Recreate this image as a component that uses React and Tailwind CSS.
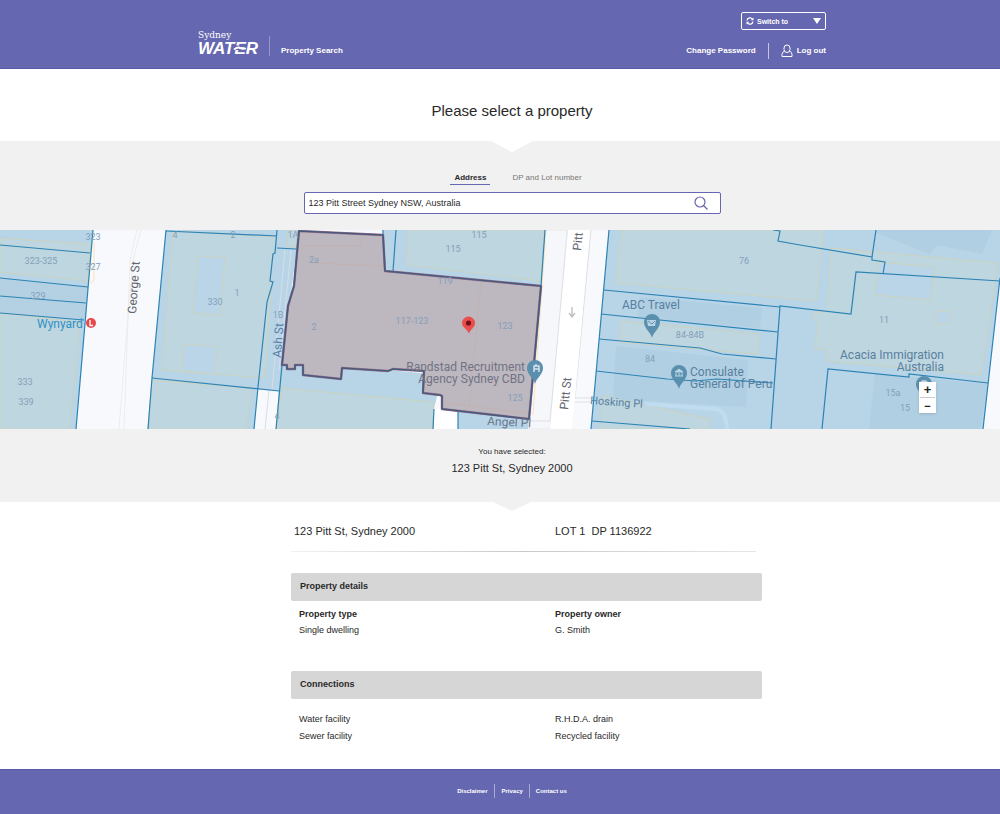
const BOUNDARIES = [
  "M0 15L90 23", "M0 48L88 57", "M0 66L86 73", "M0 83L84 90", "M93 0L76 199",
  "M166 0L152 148L148 199", "M166 1L277 6", "M152 148L279 161",
  "M277 0L275 23L273 24L270 51L273 52L267 72L258 157L254 199", "M277 18L296 19", "M282 135L276 199",
  "M396 0L393 41", "M383 0V5", "M545 0L541 56", "M458 182V199", "M434 179L433 199",
  "M609 0L591 199", "M604 60L780 77", "M601 84L778 102", "M599 109L700 118L722 124L776 129",
  "M596 141L667 149L695 151L717 149L773 153", "M592 191L690 199",
  "M773 0L780 1L778 11L800 15L872 27L872 30L885 32L883 44", "M876 0L872 27",
  "M771 199L780 76L851 84L856 42L1000 51", "M1000 48L983 199",
  "M822 199L828 139L909 147V144L988 153",
];

const BUILDINGS = [
  "M0 8L90 14L88 51L0 42Z", "M0 83L80 92L69 199H0Z",
  "M173 1L277 7L269 50L272 53L265 148L162 140Z", "M152 150L251 158L246 199H148Z",
  "M408 0L406 35L541 51L545 0Z", "M281 158L433 172V199H277Z",
  "M288 1L298 2L296 18L287 16Z",
  "M621 0L616 53L816 71L824 0Z", "M831 18L998 33L981 145L827 131L826 120L815 119L818 93L812 88L814 82L827 82Z",
  "M621 91L759 104L757 124L619 112Z", "M603 166L710 189L708 199H600Z",
];

const COURTS = [
  "M198 26L225 28L220 85L193 83Z", "M184 114L217 117L215 144L182 141Z",
  "M878 32L934 37L931 70L875 65Z", "M936 82L948 81L951 86L948 94H935Z",
];

const SELECTED =
  "M299 1L383 5L385 41L541 56L529 189L442 179L442 166L440 165L423 163L424 141L393 139L388 141L342 138L341 149L303 145V135H295V139H287V135H282L288 76L294 56Z";

const NUMBERS = [
  [93, 10, "323"], [41, 34, "323-325"], [93, 40, "327"], [38, 69, "329"], [25, 155, "333"], [26, 175, "339"],
  [175, 8, "4"], [233, 8, "2"], [215, 75, "330"], [237, 66, "1"], [293, 8, "1A"], [278, 88, "1B"], [277, 189, "4"],
  [314, 33, "2a"], [314, 100, "2"], [412, 94, "117-123"], [479, 8, "115"], [453, 22, "115"], [445, 54, "119"],
  [505, 99, "123"], [515, 171, "125"], [744, 34, "76"], [690, 108, "84-84B"], [650, 132, "84"],
  [884, 93, "11"], [893, 166, "15a"], [905, 181, "15"],
];

function PlacePin({ x, y, children }) {
  return (
    <g transform={`translate(${x} ${y})`}>
      <path d="M0 15C-1 9 -8 6 -8 -1A8 8 0 1 1 8 -1C8 6 1 9 0 15Z" fill="#5a90ae" />
      {children}
    </g>
  );
}

function PropertyMap() {
  return (
    <svg viewBox="0 0 1000 199" preserveAspectRatio="xMidYMid slice" className="block h-[199px] w-full" role="img" aria-label="Map of 123 Pitt Street and its neighbours">
      <rect width="1000" height="199" fill="#f8f9fc" />
      <g fill="none" stroke="#e5e7ec">
        <path d="M141 0L133 30L126 110L119 199M137 0L130 30L124 199" stroke="#ececef" />
        <path d="M567 0L550 199H529L541 57L545 0Z" fill="#f6f7fb" />
        <path d="M568 0L550 191H530M591 0L575 168H594M574 172H592" fill="none" stroke="#dcdfe5" />
        <path d="M568 0H590L575 168L572 199H550Z" fill="#fff" stroke="none" />
        <path d="M546 0L533 185M94 12L94 50L90 54" stroke="#fae3bd" />
      </g>
      <g fill="#b8d4e7">
        <path d="M0 0H93L76 199H0Z" />
        <path d="M166 0H299L282 135L279 161L152 148Z" />
        <path d="M152 148L258 159L254 199H148Z" />
        <path d="M281 130L442 145L434 179L433 199H276Z" />
        <path d="M383 0H545L541 57L385 42Z" />
        <path d="M458 180L529 189L528 199H458Z" />
        <path d="M609 0H1000V48L983 199H591Z" />
      </g>
      <path d="M434 179H458V199H433Z" fill="#fff" />
      <path d="M269 160L265 199M285 20L272 160M291 20L279 140" stroke="#d7dde8" fill="none" />
      <g fill="#bed6df" stroke="#cbd3c0" strokeWidth="1">
        {BUILDINGS.map((d) => <path key={d} d={d} />)}
      </g>
      <g fill="#b9d5e7" stroke="#cbd3c0">
        {COURTS.map((d) => <path key={d} d={d} />)}
      </g>
      <g fill="#b1cfe2">
        <path d="M876 3L930 24L937 15L982 24L992 0H877Z" />
        <path d="M875 144L988 154L980 199H869Z" />
        <path d="M640 67L762 78L760 98L637 87Z" />
        <path d="M616 116L748 130L746 177L613 169Z" />
        <path d="M0 48L88 57L84 90L0 83Z" opacity=".6" />
      </g>
      <path d="M645 174L716 179Q726 180 727 199" stroke="#bfdcf0" strokeWidth="4" fill="none" />
      <g fill="none" stroke="#2c83b4" strokeWidth="1.2">
        {BOUNDARIES.map((d) => <path key={d} d={d} />)}
      </g>
      <path d={SELECTED} fill="#bdb7bf" stroke="#a07488" strokeWidth="2.4" strokeLinejoin="round" />
      <path d={SELECTED} fill="none" stroke="#475b80" strokeWidth="1.7" strokeLinejoin="round" />
      <path d="M481 52L469 177M301 16H361V7M312 33L383 36M444 173L528 183" stroke="#c3b3ad" strokeWidth="1" fill="none" />

      <g fontFamily="Roboto, sans-serif" fontSize="9" fill="#849fbb" textAnchor="middle">
        {NUMBERS.map(([x, y, label]) => <text key={`${label}-${x}`} x={x} y={y}>{label}</text>)}
      </g>

      <g fontFamily="Roboto, sans-serif" fontSize="12" fill="#61656d">
        <text transform="translate(136 84) rotate(-86)">George St</text>
        <text transform="translate(281 128) rotate(-86)" fill="#5781a6">Ash St</text>
        <text transform="translate(568 180) rotate(-84)">Pitt St</text>
        <text transform="translate(581 21) rotate(-84)">Pitt</text>
      </g>
      <g fill="#58809f" fontFamily="Roboto, sans-serif" fontSize="12">
        <text x="37" y="98" fill="#2e91c5">Wynyard</text>
        <text x="622" y="79">ABC Travel</text>
        <text x="690" y="146">Consulate</text>
        <text x="690" y="158">General of Peru</text>
        <text x="944" y="129" textAnchor="end">Acacia Immigration</text>
        <text x="944" y="141" textAnchor="end">Australia</text>
        <text fontSize="11" transform="translate(590 174) rotate(4)">Hosking Pl</text>
        <text fill="#687689" transform="translate(487 195) rotate(3)">Angel Pl</text>
        <g fill="#707384">
          <text x="525" y="141" textAnchor="end">Randstad Recruitment</text>
          <text x="525" y="153" textAnchor="end">Agency Sydney CBD</text>
        </g>
      </g>

      <circle cx="91" cy="93" r="5" fill="#e9484c" />
      <path d="M90 90V95.500H93" stroke="#fff" strokeWidth="1.300" fill="none" />
      <PlacePin x={652} y={93}>
        <path d="M-5 -3H4L3 3H-4Z" fill="#b8d4e7" />
        <path d="M-4 -2L0 1L3 -2" stroke="#5a90ae" fill="none" />
      </PlacePin>
      <PlacePin x={679} y={144}>
        <path d="M-4 -2L0 -5L4 -2ZM-4 2H4M-3 -1V2M0 -1V2M3 -1V2" fill="#b8d4e7" stroke="#b8d4e7" />
      </PlacePin>
      <PlacePin x={535} y={139}>
        <path d="M-1 3V-3H4V3M-1 0H4M1 -5V-3" stroke="#d7e1ea" strokeWidth="1.500" fill="none" />
      </PlacePin>
      <PlacePin x={924} y={155}>
        <circle cy="-1" r="4" fill="#b8d4e7" />
      </PlacePin>
      <path d="M572 77V87M569 83L572 87L575 83" stroke="#b9bcc1" strokeWidth="1.300" fill="none" />
      <path d="M469 104C468 99 462 98 462 93A6.500 6.500 0 0 1 475 93C475 98 470 99 469 104Z" fill="#e94f4c" />
      <circle cx="468.500" cy="93" r="2.600" fill="#711015" />
    </svg>
  );
}

function Notch({ className }) {
  return (
    <svg viewBox="0 0 42 11" preserveAspectRatio="none" className={className} aria-hidden="true">
      <path d="M0 0H42L21 11Z" fill="currentColor" />
    </svg>
  );
}

function SectionTitle({ children }) {
  return <h2 className="flex h-7 items-center rounded-xs bg-[#d6d6d6] px-[9px] text-[9px] font-bold">{children}</h2>;
}

export default function App() {
  return (
    <div className="min-h-screen bg-white font-['Liberation_Sans',Arial,sans-serif] text-[#292929]">
      <header className="h-[69px] border-b border-[#5a5aa6] bg-[#6667b1] pl-6 text-white">
        <div className="mx-auto flex max-w-[628px] justify-between pt-3">
          <div className="flex items-end pb-[3px]">
            <a href="#home" className="flex flex-col">
              <span className="font-['DejaVu_Serif',serif] text-[9px] leading-[10px]">Sydney</span>
              <svg viewBox="0 0 62 16" className="h-4 w-[62px]" aria-label="Water">
                <text x="0" y="14" fontFamily="Liberation Sans, Arial, sans-serif" fontSize="17" fontWeight="700" fontStyle="italic" fill="#fff">WATER</text>
                <path d="M36 5.500H41V10H36Z" fill="#6667b1" />
                <path d="M36 9.500Q40 6.500 42 8T48 8.500" stroke="#fff" strokeWidth="1.800" fill="none" />
              </svg>
            </a>
            <div className="ml-[9px] h-5 border-l border-[#9596cc]" />
            <span className="ml-[11px] text-[8px] leading-[11px] font-bold">Property Search</span>
          </div>
          <div className="flex flex-col items-end gap-[13px]">
            <div className="relative">
              <select aria-label="Switch to" defaultValue="Switch to" className="block h-[18px] w-[85px] appearance-none rounded-xs border border-white bg-[#6667b1] pl-[15px] text-[7px] leading-[9px] font-bold text-white">
                <option>Switch to</option>
              </select>
              <svg viewBox="0 0 8 8" className="pointer-events-none absolute top-[5px] left-[5px] size-2" fill="none" stroke="#fff" strokeWidth="1.200" aria-hidden="true">
                <path d="M1 3.500A3 3 0 0 1 6.500 2.200M7 4.500A3 3 0 0 1 1.500 5.800" />
                <path d="M7.500 .5V3.200H4.800ZM.5 7.500V4.800H3.200Z" fill="#fff" stroke="none" />
              </svg>
              <svg viewBox="0 0 8 6" className="pointer-events-none absolute top-[6px] right-[5px] h-[6px] w-2" aria-hidden="true">
                <path d="M0 0H8L4 6Z" fill="#fff" />
              </svg>
            </div>
            <nav className="flex items-center text-[8px] leading-4 font-bold">
              <a href="#password">Change Password</a>
              <div className="ml-3 h-4 border-l border-[#c5c5e4]" />
              <a href="#logout" className="ml-3 flex items-center gap-1">
                <svg viewBox="0 0 12 14" className="h-[14px] w-3" fill="none" stroke="#fff" aria-hidden="true">
                  <rect x="3" y="1" width="6" height="7.500" rx="3" />
                  <path d="M3.500 7Q1 8 1 10.500V12.500H11V10.500Q11 8 8.500 7" strokeLinejoin="round" />
                </svg>
                Log out
              </a>
            </nav>
          </div>
        </div>
      </header>

      <main>
        <h1 className="flex h-[72px] items-center justify-center pt-3 pl-6 text-[15px] leading-5">Please select a property</h1>

        <section className="flex h-[89px] flex-col items-center bg-[#f1f1f1] pl-6">
          <Notch className="h-[11px] w-[42px] text-white" />
          <div className="mt-[19px] flex w-full max-w-[417px] items-start justify-center gap-[22px] pl-2 text-[8px] leading-[10px]">
            <button type="button" className="h-[14px] border-b border-[#6667b1] px-1 text-[8px] font-bold">Address</button>
            <button type="button" className="h-[14px] text-[#777]">DP and Lot number</button>
          </div>
          <form className="mt-[7px] flex h-[22px] w-full max-w-[417px] items-center rounded-xs border border-[#6667b1] bg-white">
            <input aria-label="Address" defaultValue="123 Pitt Street Sydney NSW, Australia" className="min-w-0 flex-1 px-1 text-[9px] leading-3 outline-none" />
            <button type="button" aria-label="Search" className="mr-3">
              <svg viewBox="0 0 14 14" className="size-[14px]" fill="none" stroke="#6667b1" strokeWidth="1.200" aria-hidden="true">
                <circle cx="6" cy="6" r="5" />
                <path d="M9.500 9.500L13.500 13.500" />
              </svg>
            </button>
          </form>
        </section>

        <div className="relative">
          <PropertyMap />
          <div className="absolute top-[152px] right-16 flex w-[17px] flex-col bg-white text-[#222] shadow-sm">
            <button type="button" aria-label="Zoom in" className="mx-px h-4 border-b border-[#ccc] text-[13px] leading-[14px] font-bold">+</button>
            <button type="button" aria-label="Zoom out" className="h-[15px] text-[11px] leading-[14px] font-bold">−</button>
          </div>
        </div>

        <section className="flex h-[73px] flex-col items-center bg-[#f1f1f1] pt-[18px] pl-6">
          <p className="text-[8px] leading-[10px]">You have selected:</p>
          <p className="mt-1 text-[11px] leading-[14px]">123 Pitt St, Sydney 2000</p>
        </section>

        <div className="flex justify-center pl-6">
          <Notch className="h-[9px] w-[38px] text-[#f1f1f1]" />
        </div>
        <div className="pb-6 pl-[53px]">
          <div className="mx-auto max-w-[471px]">
            <div className="grid grid-cols-[261px_1fr] pt-[13px] pl-[3px] text-[11px] leading-[14px]">
              <p>123 Pitt St, Sydney 2000</p>
              <p className="whitespace-pre">LOT 1  DP 1136922</p>
            </div>
            <div className="mt-[13px] mr-[6px] h-px bg-linear-to-r from-[#f1f1f1] via-[#c9c9c9] to-[#e6e6e6]" />
            <div className="mt-[21px]">
              <SectionTitle>Property details</SectionTitle>
            </div>
            <dl className="grid grid-cols-[256px_1fr] px-2 pt-[5px] text-[9px] leading-4">
              <div>
                <dt className="font-bold">Property type</dt>
                <dd>Single dwelling</dd>
              </div>
              <div>
                <dt className="font-bold">Property owner</dt>
                <dd>G. Smith</dd>
              </div>
            </dl>
            <div className="mt-[33px]">
              <SectionTitle>Connections</SectionTitle>
            </div>
            <ul className="grid grid-cols-[256px_1fr] px-2 pt-3 text-[9px] leading-[17px]">
              <li>Water facility</li>
              <li>R.H.D.A. drain</li>
              <li>Sewer facility</li>
              <li>Recycled facility</li>
            </ul>
          </div>
        </div>
      </main>

      <footer className="flex h-[45px] items-center justify-center border-t border-[#5a5aa6] bg-[#6667b1] pb-[2px] pl-6 text-[6px] leading-[14px] font-bold text-white">
        <a href="#disclaimer" className="pr-[7px]">Disclaimer</a>
        <a href="#privacy" className="border-x border-[#a9aad6] px-[6px]">Privacy</a>
        <a href="#contact" className="pl-[6px]">Contact us</a>
      </footer>
    </div>
  );
}
